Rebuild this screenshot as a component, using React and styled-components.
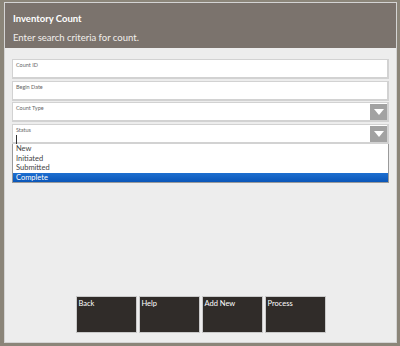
import React from "react";
import styled, { createGlobalStyle } from "styled-components";

const GlobalStyle = createGlobalStyle`
  html, body {
    margin: 0;
    padding: 0;
    background: #8b8579;
  }
  body {
    font-family: Lato, "Open Sans", sans-serif;
  }
`;

const Frame = styled.div`
  width: 400px;
  height: 346px;
  box-sizing: border-box;
  padding: 2px 3px 3px 4px;
  background: #8b8579;
`;

const Window = styled.div`
  height: 100%;
  box-sizing: border-box;
  border: 1px solid #d4d4d4;
  background: #ededed;
  display: flex;
  flex-direction: column;
`;

const Header = styled.div`
  height: 45px;
  box-sizing: border-box;
  background: #7b736d;
  padding: 10px 8px 0 8px;
  color: #fff;
  display: flex;
  flex-direction: column;
  gap: 7px;
`;

const Title = styled.div`
  font-size: 9.5px;
  font-weight: 700;
  line-height: 12px;
`;

const Subtitle = styled.div`
  font-size: 9.5px;
  color: #f2efec;
  line-height: 12px;
`;

const Form = styled.div`
  padding: 11px 7px 0 7px;
  display: flex;
  flex-direction: column;
  gap: 1.5px;
  flex: 1;
`;

const Field = styled.div`
  position: relative;
  height: 20px;
  box-sizing: border-box;
  background: #fff;
  border: 1px solid #d2d2d2;
  border-width: 1px 2px 2px 1px;
  padding: 2px 3px;
`;

const Label = styled.div`
  font-size: 5.5px;
  color: #666;
  line-height: 7px;
`;

const Caret = styled.div`
  width: 1px;
  height: 9px;
  margin-top: 1px;
  background: #333;
`;

const Arrow = styled.div`
  position: absolute;
  top: 1px;
  right: 0px;
  width: 17px;
  height: 16px;
  background: #a2a2a2;
  display: flex;
  align-items: center;
  justify-content: center;
  &::after {
    content: "";
    border-left: 5px solid transparent;
    border-right: 5px solid transparent;
    border-top: 6px solid #fff;
  }
`;

const List = styled.div`
  margin-top: -2px;
  background: #fff;
  border: 1px solid #9a9a9a;
  display: flex;
  flex-direction: column;
`;

const Option = styled.div`
  height: 9.5px;
  line-height: 9.5px;
  font-size: 7.5px;
  padding-left: 3px;
  color: ${(p) => (p.$selected ? "#fff" : "#444")};
  background: ${(p) =>
    p.$selected ? "linear-gradient(#1e6fd0, #0a56b8)" : "transparent"};
`;

const Footer = styled.div`
  display: flex;
  justify-content: center;
  gap: 2px;
  padding: 0 0 9px 0;
`;

const ActionButton = styled.button`
  width: 61px;
  height: 37px;
  box-sizing: border-box;
  background: #302c29;
  border: 1px solid #c9c9c9;
  color: #fff;
  font-family: Lato, "Open Sans", sans-serif;
  font-size: 7.5px;
  text-align: left;
  padding: 2px 2px;
  display: flex;
  align-items: flex-start;
`;

const options = ["New", "Initiated", "Submitted", "Complete"];
const buttons = ["Back", "Help", "Add New", "Process"];

export default function App() {
  return (
    <>
      <GlobalStyle />
      <Frame>
        <Window>
          <Header>
            <Title>Inventory Count</Title>
            <Subtitle>Enter search criteria for count.</Subtitle>
          </Header>
          <Form>
            <Field>
              <Label>Count ID</Label>
            </Field>
            <Field>
              <Label>Begin Date</Label>
            </Field>
            <Field>
              <Label>Count Type</Label>
              <Arrow />
            </Field>
            <Field>
              <Label>Status</Label>
              <Caret />
              <Arrow />
            </Field>
            <List>
              {options.map((o) => (
                <Option key={o} $selected={o === "Complete"}>
                  {o}
                </Option>
              ))}
            </List>
          </Form>
          <Footer>
            {buttons.map((b) => (
              <ActionButton key={b}>{b}</ActionButton>
            ))}
          </Footer>
        </Window>
      </Frame>
    </>
  );
}
